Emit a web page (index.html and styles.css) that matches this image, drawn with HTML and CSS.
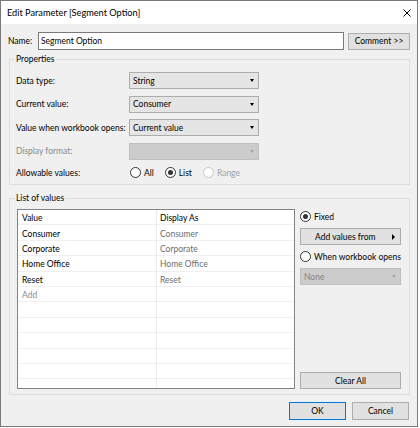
FILE: index.html
```html
<!DOCTYPE html>
<html>
<head>
<meta charset="utf-8">
<link rel="stylesheet" href="styles.css">
</head>
<body>
<div class="dialog">
  <div class="titlebar">
    <span class="title">Edit Parameter [Segment Option]</span>
    <svg class="close" viewBox="0 0 8 8"><path d="M0.5 0.5L7.5 7.5M7.5 0.5L0.5 7.5" stroke="#000" stroke-width="1" fill="none"/></svg>
  </div>
  <div class="content">
    <div class="name-row">
      <span class="name-label">Name:</span>
      <div class="textbox">Segment Option</div>
      <div class="btn comment">Comment &gt;&gt;</div>
    </div>

    <fieldset class="group props">
      <legend>Properties</legend>
      <div class="prop-grid">
        <span class="lbl">Data type:</span>
        <div class="combo"><span>String</span><i class="arrow"></i></div>
        <span class="lbl">Current value:</span>
        <div class="combo"><span>Consumer</span><i class="arrow"></i></div>
        <span class="lbl">Value when workbook opens:</span>
        <div class="combo"><span>Current value</span><i class="arrow"></i></div>
        <span class="lbl disabled">Display format:</span>
        <div class="combo disabled"><span></span><i class="arrow"></i></div>
        <span class="lbl">Allowable values:</span>
        <div class="radios">
          <span class="radio"><i class="dot"></i>All</span>
          <span class="radio checked"><i class="dot"></i>List</span>
          <span class="radio disabled"><i class="dot"></i>Range</span>
        </div>
      </div>
    </fieldset>

    <fieldset class="group values">
      <legend>List of values</legend>
      <div class="values-body">
        <div class="listbox">
          <div class="row"><span class="cell">Value</span><span class="cell">Display As</span></div>
          <div class="row"><span class="cell">Consumer</span><span class="cell alt">Consumer</span></div>
          <div class="row"><span class="cell">Corporate</span><span class="cell alt">Corporate</span></div>
          <div class="row"><span class="cell">Home Office</span><span class="cell alt">Home Office</span></div>
          <div class="row"><span class="cell">Reset</span><span class="cell alt">Reset</span></div>
          <div class="row"><span class="cell alt">Add</span><span class="cell"></span></div>
          <div class="row"><span class="cell"></span><span class="cell"></span></div>
          <div class="row"><span class="cell"></span><span class="cell"></span></div>
          <div class="row"><span class="cell"></span><span class="cell"></span></div>
          <div class="row"><span class="cell"></span><span class="cell"></span></div>
          <div class="row"><span class="cell"></span><span class="cell"></span></div>
          <div class="row"><span class="cell"></span><span class="cell"></span></div>
          <div class="row"><span class="cell"></span><span class="cell"></span></div>
        </div>
        <div class="side">
          <span class="radio checked side-radio"><i class="dot"></i>Fixed</span>
          <div class="btn addvals"><span>Add values from</span><i class="rarrow"></i></div>
          <span class="radio side-radio when"><i class="dot"></i>When workbook opens</span>
          <div class="combo disabled none"><span>None</span><i class="arrow"></i></div>
          <div class="btn clear">Clear All</div>
        </div>
      </div>
    </fieldset>

    <div class="footer">
      <div class="btn ok">OK</div>
      <div class="btn cancel">Cancel</div>
    </div>
  </div>
</div>
</body>
</html>
```

FILE: styles.css
```css
* { box-sizing: border-box; }
html, body { margin: 0; padding: 0; background: #fff; }
body {
  font-family: Lato, "Liberation Sans", sans-serif;
  font-size: 8.5px;
  color: #000;
}
.dialog {
  width: 418px;
  border: 1px solid #7a7a7a;
  background: #f0f0f0;
}
.titlebar {
  height: 23px;
  background: #fff;
  display: flex;
  align-items: center;
  justify-content: space-between;
  padding: 0 6px 0 6px;
}
.title { font-size: 9.2px; }
.close { width: 8px; height: 8px; display: block; }
.content { padding: 0 7px 0 8px; }

.name-row {
  display: flex;
  align-items: center;
  margin-top: 8px;
  height: 18px;
}
.name-label { margin-left: -1px; width: 30px; }
.textbox {
  width: 306px;
  height: 18px;
  background: #fff;
  border: 1px solid #7a7a7a;
  padding-left: 2px;
  display: flex;
  align-items: center;
}
.btn {
  background: #e1e1e1;
  border: 1px solid #adadad;
  height: 17px;
  display: flex;
  align-items: center;
  justify-content: center;
  white-space: nowrap;
}
.comment { width: 62px; margin-left: 4px; }

.group {
  margin: 0;
  border: 1px solid #dcdcdc;
  min-width: 0;
}
.group legend {
  padding: 0 1px;
  margin-left: -1px;
  height: 12px;
  line-height: 12px;
}
.props { margin-top: 3px; padding: 7px 8px 5px 6px; }
.prop-grid {
  display: grid;
  grid-template-columns: 113px 130px;
  row-gap: 6.5px;
  align-items: center;
}
.lbl { white-space: nowrap; }
.lbl.disabled { color: #8a8a8a; }

.combo {
  height: 17px;
  background: #e5e5e5;
  border: 1px solid #adadad;
  display: flex;
  align-items: center;
  justify-content: space-between;
  padding: 0 4px 0 3px;
}
.combo.disabled {
  background: #cccccc;
  border-color: #bfbfbf;
  color: #838383;
}
.arrow {
  width: 0;
  height: 0;
  border-left: 2.5px solid transparent;
  border-right: 2.5px solid transparent;
  border-top: 3px solid #000;
}
.combo.disabled .arrow { border-top-color: #a6a6a6; }
.rarrow {
  width: 0;
  height: 0;
  border-top: 3px solid transparent;
  border-bottom: 3px solid transparent;
  border-left: 3.5px solid #000;
}

.radios { display: flex; align-items: center; height: 13px; padding-left: 1px; }
.radio { display: flex; align-items: center; gap: 3px; margin-right: 11px; height: 13px; white-space: nowrap; }
.dot {
  flex: 0 0 11px;
  width: 11px;
  height: 11px;
  border-radius: 50%;
  border: 1px solid #333;
  background: #fff;
  display: flex;
  align-items: center;
  justify-content: center;
}
.radio.checked .dot::after {
  content: "";
  width: 5px;
  height: 5px;
  border-radius: 50%;
  background: #333;
}
.radio.disabled { color: #a0a0a0; }
.radio.disabled .dot { border-color: #c8c8c8; }

.values { margin-top: 7px; padding: 5px 8px 5px 7px; }
.values legend { margin-left: -2px; }
.values-body { display: flex; gap: 5px; height: 180px; }
.listbox {
  width: 278px;
  border: 1px solid #828282;
  background: #fff;
  overflow: hidden;
}
.row {
  display: flex;
  height: 15.4px;
  border-bottom: 1px solid #f0f0f0;
}
.cell {
  display: flex;
  align-items: center;
  white-space: nowrap;
  padding-top: 2px;
}
.cell:first-child { width: 139px; padding-left: 4px; border-right: 1px solid #ececec; }
.cell:last-child { padding-left: 3px; }
.cell.alt { color: #6d6d6d; }
.row:nth-child(6) .cell.alt { color: #8a8a8a; }

.side { width: 101px; display: flex; flex-direction: column; }
.side-radio { margin-top: 1px; margin-right: 0; }
.side .btn { width: 101px; }
.addvals { margin-top: 5px; justify-content: space-between; padding: 0 5px 0 14px; }
.when { margin-top: 5px; }
.none { margin-top: 5px; width: 101px; }
.clear { margin-top: auto; }

.footer {
  display: flex;
  justify-content: flex-end;
  gap: 6px;
  margin-top: 7px;
  padding: 0 1px 6px 0;
}
.footer .btn { width: 57px; height: 18px; }
.ok { border-color: #0078d7; }
```
